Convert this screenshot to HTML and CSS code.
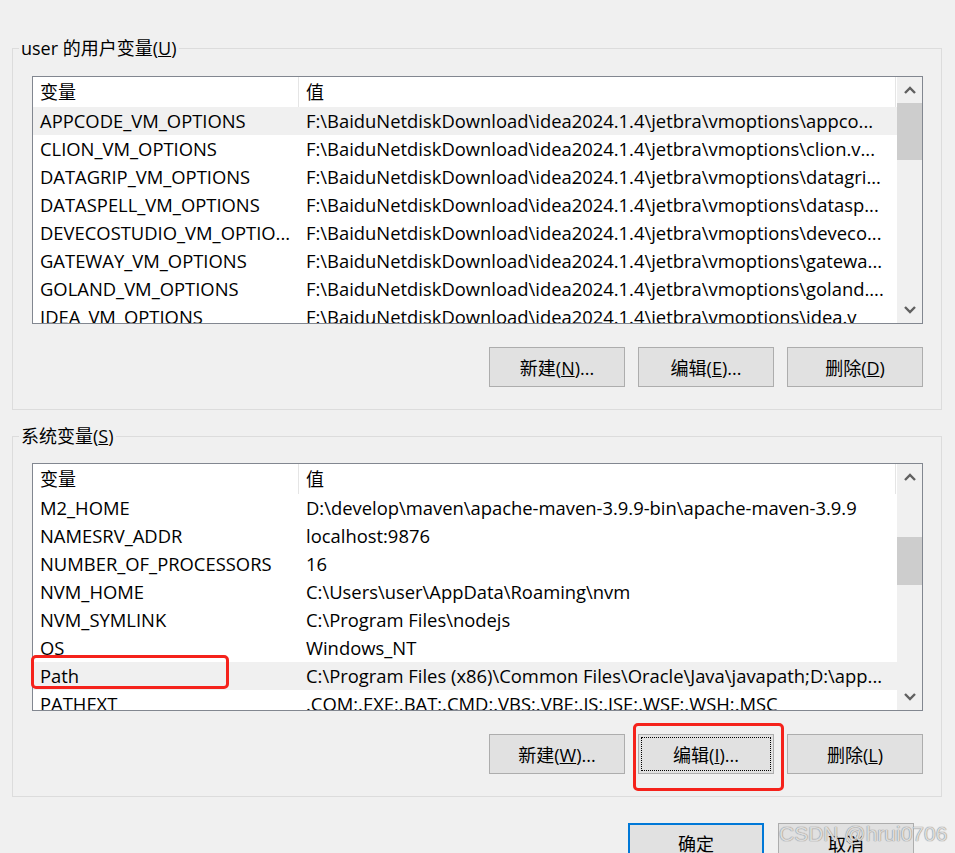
FILE: index.html
```html
<!DOCTYPE html>
<html lang="zh-CN">
<head>
  <meta charset="UTF-8">
  <title>环境变量</title>
  <link rel="stylesheet" href="styles.css">
</head>
<body>
  <div class="dialog">
    <!-- 用户变量 -->
    <fieldset class="group">
      <legend>user 的用户变量(<u>U</u>)</legend>
      <div class="listview">
        <div class="lv-main">
          <div class="lv-head"><div class="c1">变量</div><div class="c2">值</div></div>
          <div class="lv-row sel"><div class="c1">APPCODE_VM_OPTIONS</div><div class="c2">F:\BaiduNetdiskDownload\idea2024.1.4\jetbra\vmoptions\appco...</div></div>
          <div class="lv-row"><div class="c1">CLION_VM_OPTIONS</div><div class="c2">F:\BaiduNetdiskDownload\idea2024.1.4\jetbra\vmoptions\clion.v...</div></div>
          <div class="lv-row"><div class="c1">DATAGRIP_VM_OPTIONS</div><div class="c2">F:\BaiduNetdiskDownload\idea2024.1.4\jetbra\vmoptions\datagri...</div></div>
          <div class="lv-row"><div class="c1">DATASPELL_VM_OPTIONS</div><div class="c2">F:\BaiduNetdiskDownload\idea2024.1.4\jetbra\vmoptions\datasp...</div></div>
          <div class="lv-row"><div class="c1">DEVECOSTUDIO_VM_OPTIO...</div><div class="c2">F:\BaiduNetdiskDownload\idea2024.1.4\jetbra\vmoptions\deveco...</div></div>
          <div class="lv-row"><div class="c1">GATEWAY_VM_OPTIONS</div><div class="c2">F:\BaiduNetdiskDownload\idea2024.1.4\jetbra\vmoptions\gatewa...</div></div>
          <div class="lv-row"><div class="c1">GOLAND_VM_OPTIONS</div><div class="c2">F:\BaiduNetdiskDownload\idea2024.1.4\jetbra\vmoptions\goland....</div></div>
          <div class="lv-row"><div class="c1">IDEA_VM_OPTIONS</div><div class="c2">F:\BaiduNetdiskDownload\idea2024.1.4\jetbra\vmoptions\idea.v</div></div>
        </div>
        <div class="vscroll">
          <div class="arrow"><svg width="12" height="8" viewBox="0 0 12 8"><polyline points="1,7 6,2 11,7" fill="none" stroke="#606060" stroke-width="2.4"/></svg></div>
          <div class="track"><div class="thumb thumb-user"></div></div>
          <div class="arrow"><svg width="12" height="8" viewBox="0 0 12 8"><polyline points="1,1 6,6 11,1" fill="none" stroke="#606060" stroke-width="2.4"/></svg></div>
        </div>
      </div>
      <div class="btn-row">
        <button class="btn">新建(<u>N</u>)...</button>
        <button class="btn">编辑(<u>E</u>)...</button>
        <button class="btn">删除(<u>D</u>)</button>
      </div>
    </fieldset>

    <!-- 系统变量 -->
    <fieldset class="group group-sys">
      <legend>系统变量(<u>S</u>)</legend>
      <div class="listview">
        <div class="lv-main">
          <div class="lv-head"><div class="c1">变量</div><div class="c2">值</div></div>
          <div class="lv-row"><div class="c1">M2_HOME</div><div class="c2">D:\develop\maven\apache-maven-3.9.9-bin\apache-maven-3.9.9</div></div>
          <div class="lv-row"><div class="c1">NAMESRV_ADDR</div><div class="c2">localhost:9876</div></div>
          <div class="lv-row"><div class="c1">NUMBER_OF_PROCESSORS</div><div class="c2">16</div></div>
          <div class="lv-row"><div class="c1">NVM_HOME</div><div class="c2">C:\Users\user\AppData\Roaming\nvm</div></div>
          <div class="lv-row"><div class="c1">NVM_SYMLINK</div><div class="c2">C:\Program Files\nodejs</div></div>
          <div class="lv-row"><div class="c1">OS</div><div class="c2">Windows_NT</div></div>
          <div class="lv-row sel"><div class="c1">Path</div><div class="c2">C:\Program Files (x86)\Common Files\Oracle\Java\javapath;D:\app...</div></div>
          <div class="lv-row"><div class="c1">PATHEXT</div><div class="c2">.COM;.EXE;.BAT;.CMD;.VBS;.VBE;.JS;.JSE;.WSF;.WSH;.MSC</div></div>
        </div>
        <div class="vscroll">
          <div class="arrow"><svg width="12" height="8" viewBox="0 0 12 8"><polyline points="1,7 6,2 11,7" fill="none" stroke="#606060" stroke-width="2.4"/></svg></div>
          <div class="track"><div class="thumb thumb-sys"></div></div>
          <div class="arrow"><svg width="12" height="8" viewBox="0 0 12 8"><polyline points="1,1 6,6 11,1" fill="none" stroke="#606060" stroke-width="2.4"/></svg></div>
        </div>
      </div>
      <div class="btn-row">
        <button class="btn">新建(<u>W</u>)...</button>
        <button class="btn focus">编辑(<u>I</u>)...</button>
        <button class="btn">删除(<u>L</u>)</button>
      </div>
    </fieldset>

    <div class="footer">
      <button class="btn default">确定</button>
      <button class="btn">取消</button>
    </div>

    <!-- 标注 -->
    <div class="mark mark-path"></div>
    <div class="mark mark-edit"></div>
    <div class="watermark">CSDN @hrui0706</div>
  </div>
</body>
</html>
```

FILE: styles.css
```css
/* 环境变量对话框 */
body {
  margin: 0;
  background-color: #f0f0f0;
  font-family: "Open Sans", "Noto Sans CJK SC", sans-serif;
  font-size: 18px;
  color: #000;
  overflow: hidden;
}

.dialog {
  position: relative;
  width: 955px;
  height: 853px;
  padding-top: 35px;
  box-sizing: border-box;
}

/* 分组框 */
.group {
  margin: 0 0 0 12px;
  width: 930px;
  box-sizing: border-box;
  border: 1px solid #dcdcdc;
  padding: 0 18px 22px 19px;
  min-width: 0;
}
.group legend {
  margin-left: -13px;
  padding: 0 2px;
  line-height: 26px;
}
.group-sys {
  margin-top: 13px;
}

/* 列表 */
.listview {
  display: flex;
  height: 248px;
  margin-top: 15px;
  border: 1px solid #828790;
  box-sizing: border-box;
  background-color: #fff;
  font-size: 18.4px;
}
.group-sys .listview {
  margin-top: 14px;
}
.lv-main {
  flex: 1;
  overflow: hidden;
}
.lv-head, .lv-row {
  display: flex;
  white-space: nowrap;
}
.lv-head {
  height: 30px;
  line-height: 30px;
  width: 862px;
  border-right: 1px solid #e5e5e5;
  font-size: 18px;
}
.lv-row {
  height: 28px;
  line-height: 28px;
}
.lv-row.sel {
  background-color: #f0f0f0;
}
.c1 {
  width: 266px;
  padding-left: 7px;
  box-sizing: border-box;
  overflow: hidden;
}
.lv-head .c1 {
  border-right: 1px solid #e5e5e5;
}
.c2 {
  flex: 1;
  padding-left: 7px;
  overflow: hidden;
}

/* 滚动条 */
.vscroll {
  width: 25px;
  display: flex;
  flex-direction: column;
  background-color: #f0f0f0;
}
.arrow {
  height: 26px;
  display: flex;
  align-items: center;
  justify-content: center;
}
.track {
  flex: 1;
}
.thumb {
  background-color: #cdcdcd;
}
.thumb-user {
  height: 57px;
}
.thumb-sys {
  margin-top: 47px;
  height: 48px;
}

/* 按钮 */
.btn-row {
  display: flex;
  justify-content: flex-end;
  gap: 13px;
  margin-top: 23px;
}
.btn {
  width: 136px;
  height: 40px;
  padding: 0;
  background-color: #e1e1e1;
  border: 1px solid #adadad;
  font-family: inherit;
  font-size: 18px;
  color: #000;
}
.btn.focus {
  outline: 1px dotted #000;
  outline-offset: -4px;
}
.btn.default {
  border: 2px solid #0078d7;
}
.footer {
  display: flex;
  justify-content: flex-end;
  gap: 14px;
  margin-top: 26px;
  padding-right: 41px;
}

/* 红框标注 */
.mark {
  position: absolute;
  border: 3px solid #f5221b;
  border-radius: 5px;
  box-sizing: border-box;
}
.mark-path {
  left: 31px;
  top: 655px;
  width: 198px;
  height: 34px;
}
.mark-edit {
  left: 633px;
  top: 723px;
  width: 151px;
  height: 68px;
}
.watermark {
  position: absolute;
  left: 779px;
  top: 822px;
  font-family: "Liberation Sans", sans-serif;
  font-size: 21px;
  color: rgba(235, 235, 235, 0.85);
  text-shadow: 0 0 1px #8a8a8a, 0 0 1px #8a8a8a;
}
```
